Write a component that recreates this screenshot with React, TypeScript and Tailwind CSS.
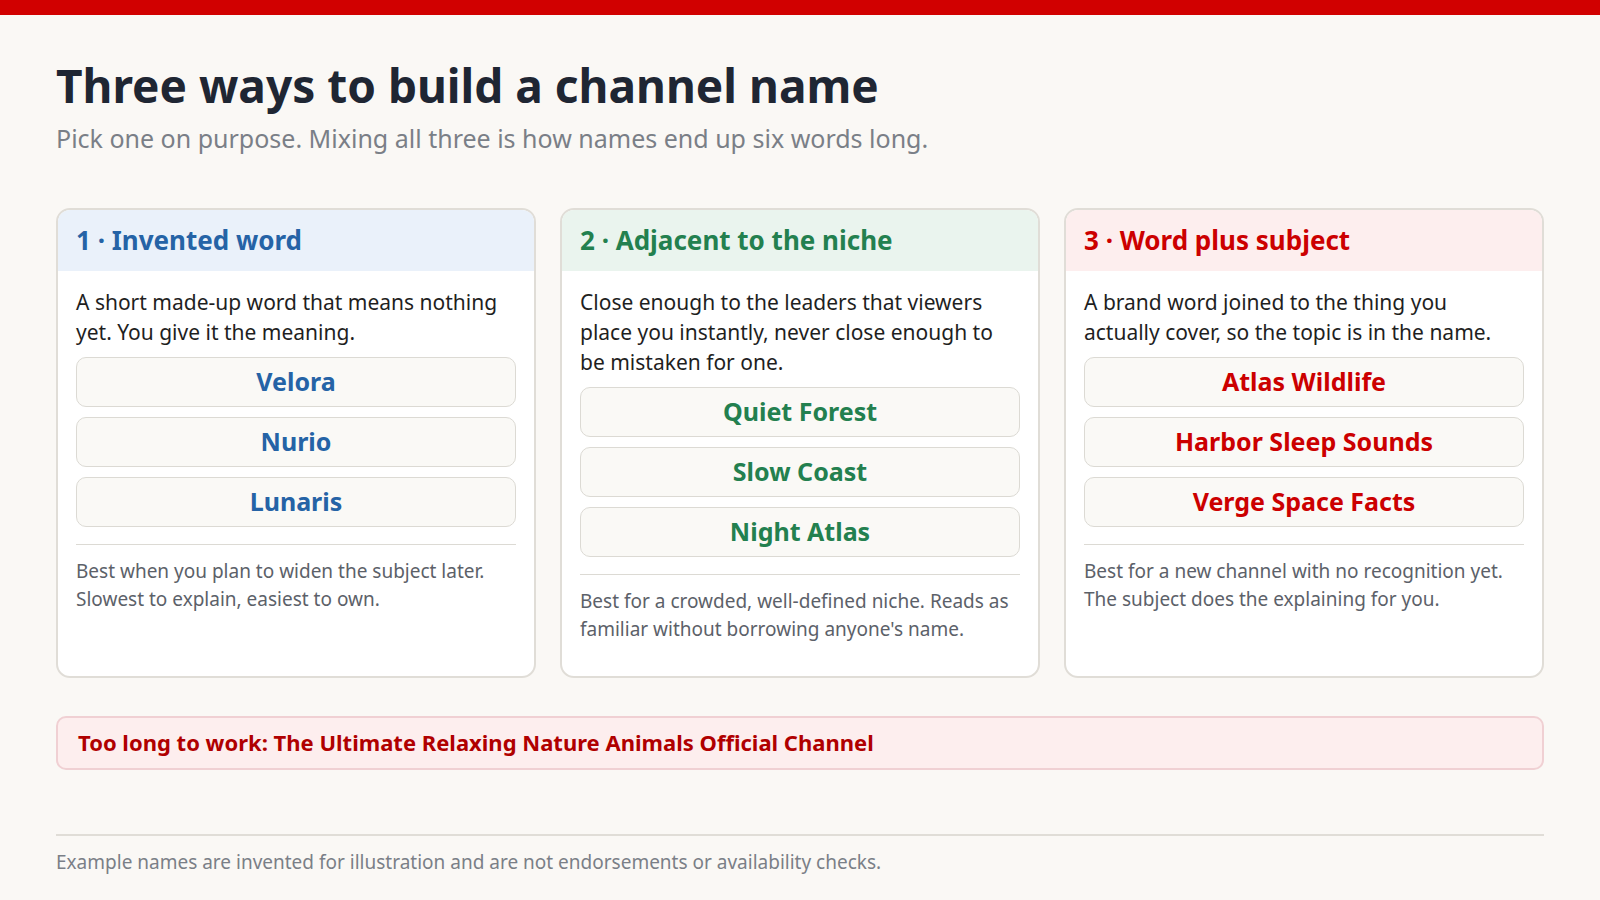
const cards = [
  {
    title: "1 · Invented word",
    head: "bg-[#eaf1fa]",
    color: "text-[#2563a6]",
    desc: "A short made-up word that means nothing yet. You give it the meaning.",
    names: ["Velora", "Nurio", "Lunaris"],
    note: "Best when you plan to widen the subject later. Slowest to explain, easiest to own.",
  },
  {
    title: "2 · Adjacent to the niche",
    head: "bg-[#eaf4ee]",
    color: "text-[#23804f]",
    desc: "Close enough to the leaders that viewers place you instantly, never close enough to be mistaken for one.",
    names: ["Quiet Forest", "Slow Coast", "Night Atlas"],
    note: "Best for a crowded, well-defined niche. Reads as familiar without borrowing anyone's name.",
  },
  {
    title: "3 · Word plus subject",
    head: "bg-[#fdeeee]",
    color: "text-[#cc0000]",
    desc: "A brand word joined to the thing you actually cover, so the topic is in the name.",
    names: ["Atlas Wildlife", "Harbor Sleep Sounds", "Verge Space Facts"],
    note: "Best for a new channel with no recognition yet. The subject does the explaining for you.",
  },
];

export default function App() {
  return (
    <div className="min-h-[900px] bg-[#faf8f5] [font-family:'Liberation_Sans',Arial,sans-serif]">
      <div className="h-[15px] bg-[#d10000]" />
      <div className="px-14 pt-[42px]">
        <h1 className="text-[46px] font-bold text-[#1f2633] leading-[56px]">Three ways to build a channel name</h1>
        <p className="mt-[7px] text-[25px] text-[#7a7f87]">
          Pick one on purpose. Mixing all three is how names end up six words long.
        </p>
        <div className="mt-[50px] grid grid-cols-3 gap-[24px]">
          {cards.map((c) => (
            <div key={c.title} className="h-[470px] rounded-[14px] border-2 border-[#e0ddd7] bg-white overflow-hidden">
              <div className={`${c.head} h-[61px] px-[18px] flex items-center`}>
                <span className={`${c.color} text-[26px] font-bold`}>{c.title}</span>
              </div>
              <div className="px-[18px] pt-[16px]">
                <p className="text-[21px] leading-[30px] text-[#1f1f1f]">{c.desc}</p>
                <div className="mt-[10px] flex flex-col gap-[10px]">
                  {c.names.map((n) => (
                    <div key={n} className={`h-[50px] rounded-[10px] border border-[#dcdad4] bg-[#faf9f6] flex items-center justify-center text-[25px] font-bold ${c.color}`}>
                      {n}
                    </div>
                  ))}
                </div>
                <div className="mt-[17px] border-t border-[#dcdad4] pt-[12px] text-[19px] leading-[28px] text-[#5c6169]">
                  {c.note}
                </div>
              </div>
            </div>
          ))}
        </div>
        <div className="mt-[38px] h-[54px] rounded-[10px] border-2 border-[#f0d0d3] bg-[#fdeeee] px-[20px] flex items-center text-[22px] font-bold text-[#b00000]">
          Too long to work: The Ultimate Relaxing Nature Animals Official Channel
        </div>
        <div className="mt-[64px] border-t-2 border-[#e0ddd7] pt-[12px] text-[19px] text-[#7a7f87]">
          Example names are invented for illustration and are not endorsements or availability checks.
        </div>
      </div>
    </div>
  );
}
